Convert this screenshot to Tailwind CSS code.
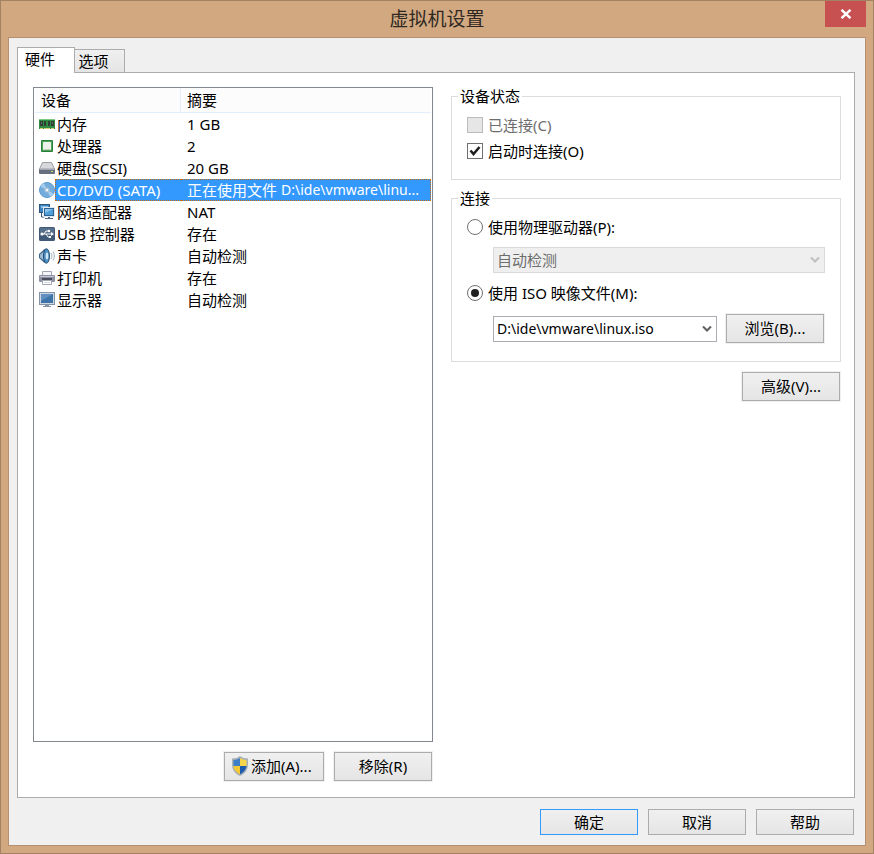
<!DOCTYPE html>
<html lang="zh-CN">
<head>
<meta charset="utf-8">
<meta name="viewport" content="width=device-width, initial-scale=1">
<title>虚拟机设置</title>
<script src="https://cdn.jsdelivr.net/npm/@tailwindcss/browser@4"></script>
</head>
<body class="font-['Noto_Sans','Noto_Sans_CJK_SC',sans-serif] text-[15px] leading-[22px] text-black">
<div class="flex min-h-screen flex-col border border-[#a28164] bg-[#d2a881] px-[7px] pb-[7px]">
  <header class="relative flex h-9 items-center justify-center">
    <h1 class="text-[19px] leading-6 text-[#2f2822]">虚拟机设置</h1>
    <button type="button" aria-label="关闭" class="absolute top-0 right-0 flex h-[26px] w-[41px] items-center justify-center bg-[#c75050]">
      <svg class="h-[10px] w-3" viewBox="0 0 12 10" fill="none" stroke="#fff" stroke-width="2.400"><path d="M1.500 .8 10.500 9.200M10.500 .8 1.500 9.200"/></svg>
    </button>
  </header>

  <main class="flex grow flex-col border border-[#b58f70] bg-[#f0f0f0] pt-[9px] pr-[10px] pb-[10px] pl-2">
    <div role="tablist" class="relative -mb-px flex items-end">
      <button type="button" role="tab" aria-selected="true" class="h-[26px] w-[58px] border border-b-0 border-[#acacac] bg-white pr-3 pb-1 leading-5">硬件</button>
      <button type="button" role="tab" aria-selected="false" class="h-6 w-[50px] border border-l-0 border-[#acacac] bg-linear-to-b from-[#f0f0f0] to-[#e5e5e5] pr-3 leading-5">选项</button>
    </div>

    <section role="tabpanel" class="grid grow grid-cols-[minmax(0,400fr)_minmax(0,390fr)] gap-x-[18px] border border-[#acacac] bg-white pt-[14px] pr-[13px] pb-4 pl-[15px]">
      <div class="flex flex-col">
        <div class="grow border border-[#828790] px-px">
          <table class="w-full table-fixed border-separate border-spacing-0 text-left whitespace-nowrap">
            <thead>
              <tr class="h-[25px] bg-[#fcfcfc]">
                <th scope="col" class="w-[146px] border-r border-b border-[#e1eefb] p-0 pl-[6px] font-normal">设备</th>
                <th scope="col" class="border-b border-[#e1eefb] p-0 pl-[6px] font-normal">摘要</th>
              </tr>
            </thead>
            <tbody>
              <tr class="h-[22px]">
                <td class="p-0"><div class="flex items-center gap-0.5 pl-1">
                  <svg class="size-4 shrink-0" viewBox="0 0 16 16"><path d="M0 3h16v10H0z" fill="#2f8c42"/><path d="M0 3h16v1H0z" fill="#7ccb80"/><path d="M1 5h3v5H1zM5 5h2v5H5zM9 5h2v5H9zM12 5h3v5h-3z" fill="#2f3f36"/><path d="M2 6h1v2H2zM13 6h1v2h-1z" fill="#58705f"/><path d="M1 12h3v1H1zM5 12h6v1H5zM12 12h3v1h-3z" fill="#d9cf7d"/></svg>
                  <span>内存</span></div></td>
                <td class="p-0 pl-[6px]">1 GB</td>
              </tr>
              <tr class="h-[22px]">
                <td class="p-0"><div class="flex items-center gap-0.5 pl-1">
                  <svg class="size-4 shrink-0" viewBox="0 0 16 16"><rect x="2" y="2" width="12" height="12" rx="1" fill="#2c7c3c"/><path d="M3 3h10v10H3z" fill="#4fa659"/><rect x="4" y="4" width="8" height="8" rx="1" fill="#edf1ec"/><path d="M5 11h6v1H5z" fill="#c3cfc1"/></svg>
                  <span>处理器</span></div></td>
                <td class="p-0 pl-[6px]">2</td>
              </tr>
              <tr class="h-[22px]">
                <td class="p-0"><div class="flex items-center gap-0.5 pl-1">
                  <svg class="size-4 shrink-0" viewBox="0 0 16 16"><path d="M3.500 2.500h9L15.500 9H.5z" fill="#d6d8dc" stroke="#9a9ea6"/><rect x="0" y="9" width="16" height="5" rx="1" fill="#687080"/><path d="M1 9h14v1H1z" fill="#a3a9b4"/><path d="M12 11h2v1h-2z" fill="#b2e36d"/></svg>
                  <span>硬盘(SCSI)</span></div></td>
                <td class="p-0 pl-[6px]">20 GB</td>
              </tr>
              <tr class="h-[22px] text-white" aria-selected="true">
                <td class="p-0 align-top"><div class="flex h-[22px] items-center pl-1">
                  <svg class="size-4 shrink-0" viewBox="0 0 16 16"><circle cx="8" cy="8" r="7.500" fill="#74addc" stroke="#5c98cd"/><path d="M8 8 1.500 4.500A7.500 7.500 0 0 1 5 1.300zM8 8l6.500 3.500a7.500 7.500 0 0 1-3.500 3.200z" fill="#a5cdec"/><circle cx="8" cy="8" r="2.500" fill="#a9c4d8"/><circle cx="8" cy="8" r="1.200" fill="#f3f6f9"/></svg>
                  <span class="h-[22px] grow border-y border-l border-dotted border-[#cc6600] bg-[#3399ff] pl-px leading-5">CD/DVD (SATA)</span></div></td>
                <td class="p-0 align-top"><div title="正在使用文件 D:\ide\vmware\linux.iso" class="flex h-[22px] items-center gap-1 border-y border-r border-dotted border-[#cc6600] bg-[#3399ff] pl-[6px] leading-5"><span>正在使用文件</span><span class="text-sm leading-5">D:\ide\vmware\linu...</span></div></td>
              </tr>
              <tr class="h-[22px]">
                <td class="p-0"><div class="flex items-center gap-0.5 pl-1">
                  <svg class="size-4 shrink-0" viewBox="0 0 16 16"><rect x=".5" y=".5" width="10" height="8" fill="#3b83bd" stroke="#2d577e"/><path d="M2 2h7v2H2z" fill="#8cc2e7"/><path d="M2.500 9v4h3" fill="none" stroke="#3c5977"/><rect x="4.500" y="3.500" width="11" height="9" fill="#2d618f" stroke="#dfe9f2"/><path d="M6 5h8v6H6z" fill="#4f9fd8"/><path d="M6 5h8l-8 4z" fill="#8cc3ea"/><path d="M9 13h2v1H9zM6 14h8v1H6z" fill="#506b86"/></svg>
                  <span>网络适配器</span></div></td>
                <td class="p-0 pl-[6px]">NAT</td>
              </tr>
              <tr class="h-[22px]">
                <td class="p-0"><div class="flex items-center gap-0.5 pl-1">
                  <svg class="size-4 shrink-0" viewBox="0 0 16 16"><rect x="0" y="1" width="16" height="14" rx="1.500" fill="#405a78"/><path d="M1 2h14v5H1z" fill="#566f8b"/><path d="M3 8h10M5 8l2-3h3M7 8l2 3h2" fill="none" stroke="#fff"/><circle cx="3" cy="8" r="1.600" fill="#fff"/><path d="m12 6 3 2-3 2z" fill="#fff"/><circle cx="10" cy="5" r="1.200" fill="#fff"/><path d="M10 10h2v2h-2z" fill="#fff"/></svg>
                  <span>USB 控制器</span></div></td>
                <td class="p-0 pl-[6px]">存在</td>
              </tr>
              <tr class="h-[22px]">
                <td class="p-0"><div class="flex items-center gap-0.5 pl-1">
                  <svg class="size-4 shrink-0" viewBox="0 0 16 16"><path d="M0 6 5 1.500 7 .5v15l-2-1L0 10z" fill="#3c668f"/><path d="M1 6.500 5 3.500v9L1 9.500z" fill="#9db9d0"/><ellipse cx="7.500" cy="8" rx="3" ry="7.200" fill="#4d92c6" stroke="#264a70"/><ellipse cx="8" cy="8" rx="1.300" ry="3.500" fill="#cfe7f8"/><path d="M12 5c1.200 2 1.200 4 0 6M14 3.500c1.800 3 1.800 6 0 9" fill="none" stroke="#9fb0be"/></svg>
                  <span>声卡</span></div></td>
                <td class="p-0 pl-[6px]">自动检测</td>
              </tr>
              <tr class="h-[22px]">
                <td class="p-0"><div class="flex items-center gap-0.5 pl-1">
                  <svg class="size-4 shrink-0" viewBox="0 0 16 16"><path d="M3.500 1.500h9V6h-9z" fill="#f3f6f9" stroke="#9ca4b3"/><rect x="0" y="5" width="16" height="7" rx="1" fill="#8e92a4"/><path d="M1 6h14v1H1z" fill="#c5c8d2"/><path d="M3 8h10v2H3z" fill="#4a4e60"/><path d="M3.500 10.500h9v4h-9z" fill="#fff" stroke="#a0a6b4"/><path d="M5 12h6v1H5z" fill="#d3d8e0"/></svg>
                  <span>打印机</span></div></td>
                <td class="p-0 pl-[6px]">存在</td>
              </tr>
              <tr class="h-[22px]">
                <td class="p-0"><div class="flex items-center gap-0.5 pl-1">
                  <svg class="size-4 shrink-0" viewBox="0 0 16 16"><rect x=".5" y=".5" width="15" height="12" fill="#cfd8e2" stroke="#8394a6"/><path d="M2 2h12v9H2z" fill="#3f74a8"/><path d="M2 2h12L2 9z" fill="#5f90bf"/><path d="M6 13h4v1H6zM4 14h8v1H4z" fill="#8796a5"/></svg>
                  <span>显示器</span></div></td>
                <td class="p-0 pl-[6px]">自动检测</td>
              </tr>
            </tbody>
          </table>
        </div>
        <div class="mt-[10px] flex justify-end gap-[10px] pr-px">
          <button type="button" class="flex h-[29px] w-[100px] items-center gap-[3px] border border-[#acacac] bg-linear-to-b from-[#f0f0f0] to-[#e5e5e5] pb-0.5 pl-[7px] outline outline-[#f0f0f0]">
            <svg class="h-5 w-4" viewBox="0 0 16 20"><path d="M8 0c2 1.700 5 2.500 8 2.500V9c0 5-3.500 9-8 11-4.500-2-8-6-8-11V2.500C3 2.500 6 1.700 8 0z" fill="#a9b0b5"/><path d="M8 2v8H1.500V4C4 4 6.500 3.200 8 2z" fill="#3c7fc8"/><path d="M8 2v8h6.500V4C12 4 9.500 3.200 8 2z" fill="#f6d54a"/><path d="M8 10H1.500c.4 3.800 3.200 6.700 6.500 8.300z" fill="#f3c833"/><path d="M8 10h6.500c-.4 3.800-3.200 6.700-6.500 8.300z" fill="#1e5bae"/></svg>
            <span>添加(A)...</span>
          </button>
          <button type="button" class="h-[29px] w-[98px] border border-[#acacac] bg-linear-to-b from-[#f0f0f0] to-[#e5e5e5] pb-0.5 outline outline-[#f0f0f0]">移除(R)</button>
        </div>
      </div>

      <div class="flex flex-col">
        <fieldset class="border border-[#dcdcdc] px-[15px] pb-[17px]">
          <legend class="-ml-[9px] h-[18px] px-[2px] leading-[18px]">设备状态</legend>
          <div class="mt-[9px] flex flex-col gap-1">
            <label class="flex items-center gap-[5px] text-[#6d6d6d]"><input type="checkbox" disabled class="size-4 appearance-none border border-[#bcbcbc] bg-[#e6e6e6]">已连接(C)</label>
            <label class="flex items-center gap-[5px]">
              <span class="grid"><input type="checkbox" checked class="peer col-start-1 row-start-1 size-4 appearance-none border border-[#707070] bg-white"><svg class="pointer-events-none invisible col-start-1 row-start-1 size-4 peer-checked:visible" viewBox="0 0 16 16"><path d="M3.500 7.500 6.500 11l6-7" fill="none" stroke="#212121" stroke-width="2.600"/></svg></span>启动时连接(O)</label>
          </div>
        </fieldset>

        <fieldset class="mt-[9px] border border-[#dcdcdc] px-[15px] pb-[18px]">
          <legend class="-ml-[9px] h-[18px] px-[2px] leading-[18px]">连接</legend>
          <label class="mt-[9px] flex items-center gap-[5px]"><input type="radio" name="source" class="size-4 appearance-none rounded-full border border-[#707070] bg-white bg-clip-content p-[3px] checked:bg-[#212121]">使用物理驱动器(P):</label>
          <div class="mt-[9px] ml-[26px] grid items-center">
            <select disabled aria-label="物理驱动器" class="col-start-1 row-start-1 h-[26px] w-full appearance-none border border-[#d9d9d9] bg-[#efefef] pl-[3px] leading-6 text-[#6d6d6d] opacity-100"><option>自动检测</option></select>
            <svg class="pointer-events-none col-start-1 row-start-1 mr-[5px] h-2 w-[10px] justify-self-end" viewBox="0 0 10 8"><path d="m1 1.500 4 4 4-4" fill="none" stroke="#bfbfbf" stroke-width="2"/></svg>
          </div>
          <label class="mt-[9px] flex items-center gap-[5px]"><input type="radio" name="source" checked class="size-4 appearance-none rounded-full border border-[#707070] bg-white bg-clip-content p-[3px] checked:bg-[#212121]">使用 ISO 映像文件(M):</label>
          <div class="mt-[10px] mr-px ml-[26px] flex items-center gap-[9px]">
            <div class="grid grow items-center">
              <select aria-label="ISO 映像文件" class="col-start-1 row-start-1 h-[26px] w-full appearance-none border border-[#abadb3] bg-white pl-[3px] text-sm leading-6"><option>D:\ide\vmware\linux.iso</option></select>
              <svg class="pointer-events-none col-start-1 row-start-1 mr-[5px] h-2 w-[10px] justify-self-end" viewBox="0 0 10 8"><path d="m1 1.500 4 4 4-4" fill="none" stroke="#606060" stroke-width="2"/></svg>
            </div>
            <button type="button" class="h-[29px] w-[98px] border border-[#acacac] bg-linear-to-b from-[#f0f0f0] to-[#e5e5e5] pb-0.5 outline outline-[#f0f0f0]">浏览(B)...</button>
          </div>
        </fieldset>

        <button type="button" class="mt-[10px] mr-px h-[29px] w-[98px] self-end border border-[#acacac] bg-linear-to-b from-[#f0f0f0] to-[#e5e5e5] pb-0.5 outline outline-[#f0f0f0]">高级(V)...</button>
      </div>
    </section>

    <footer class="mt-[11px] flex justify-end gap-[10px] pr-px">
      <button type="button" class="h-[26px] w-[98px] border border-[#3399ff] bg-linear-to-b from-[#f0f0f0] to-[#e5e5e5]">确定</button>
      <button type="button" class="h-[26px] w-[98px] border border-[#acacac] bg-linear-to-b from-[#f0f0f0] to-[#e5e5e5]">取消</button>
      <button type="button" class="h-[26px] w-[98px] border border-[#acacac] bg-linear-to-b from-[#f0f0f0] to-[#e5e5e5]">帮助</button>
    </footer>
  </main>
</div>
</body>
</html>
